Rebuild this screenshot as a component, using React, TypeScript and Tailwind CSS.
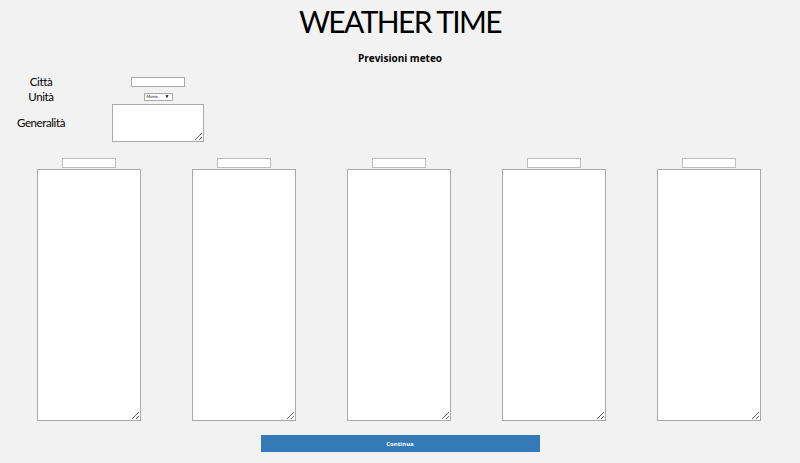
const giorni = [1, 2, 3, 4, 5];

export default function App() {
  return (
    <div className="h-[463px] w-[800px] overflow-hidden bg-[#f2f2f2] font-['Lato',sans-serif] text-black">
      <h1 className="pt-[5px] text-center text-[30px] leading-[32px] tracking-[-1.6px]">WEATHER TIME</h1>
      <h2 className="mt-[15px] text-center font-['Open_Sans',sans-serif] text-[10px] font-bold leading-[12px]">
        Previsioni meteo
      </h2>

      {/* form */}
      <div className="mt-[11px] grid grid-cols-[82px_92px] gap-x-[30px] text-[11.5px] tracking-[-0.4px]">
        <label className="flex h-[14px] items-center justify-center">Città</label>
        <div className="flex h-[14px] items-center justify-center">
          <input className="h-[10px] w-[54px] border border-[#a9a9a9] bg-white" />
        </div>
        <label className="flex h-[15px] items-center justify-center">Unità</label>
        <div className="flex h-[15px] items-center justify-center">
          <div className="flex h-[8px] w-[29px] items-center justify-between border border-[#a9a9a9] bg-white px-[2px] text-[4px] leading-none tracking-normal">
            <span>Metric</span>
            <span className="text-[5px]">▼</span>
          </div>
        </div>
        <label className="flex h-[38px] items-center justify-center">Generalità</label>
        <textarea className="h-[38px] w-[92px] resize border border-[#a9a9a9] bg-white" />
      </div>

      {/* giorni */}
      <div className="mt-[16px] flex gap-[51px] pl-[37px]">
        {giorni.map((g) => (
          <div key={g} className="flex w-[104px] flex-col items-center">
            <input className="h-[10px] w-[54px] border border-[#bdbdbd] bg-white" />
            <textarea className="mt-[1px] h-[252px] w-[104px] resize border border-[#a9a9a9] bg-white" />
          </div>
        ))}
      </div>

      <div className="mt-[14px] flex justify-center">
        <button className="h-[17px] w-[279px] bg-[#337ab7] font-['Open_Sans',sans-serif] text-[6px] font-bold leading-none text-white">
          Continua
        </button>
      </div>
    </div>
  );
}
